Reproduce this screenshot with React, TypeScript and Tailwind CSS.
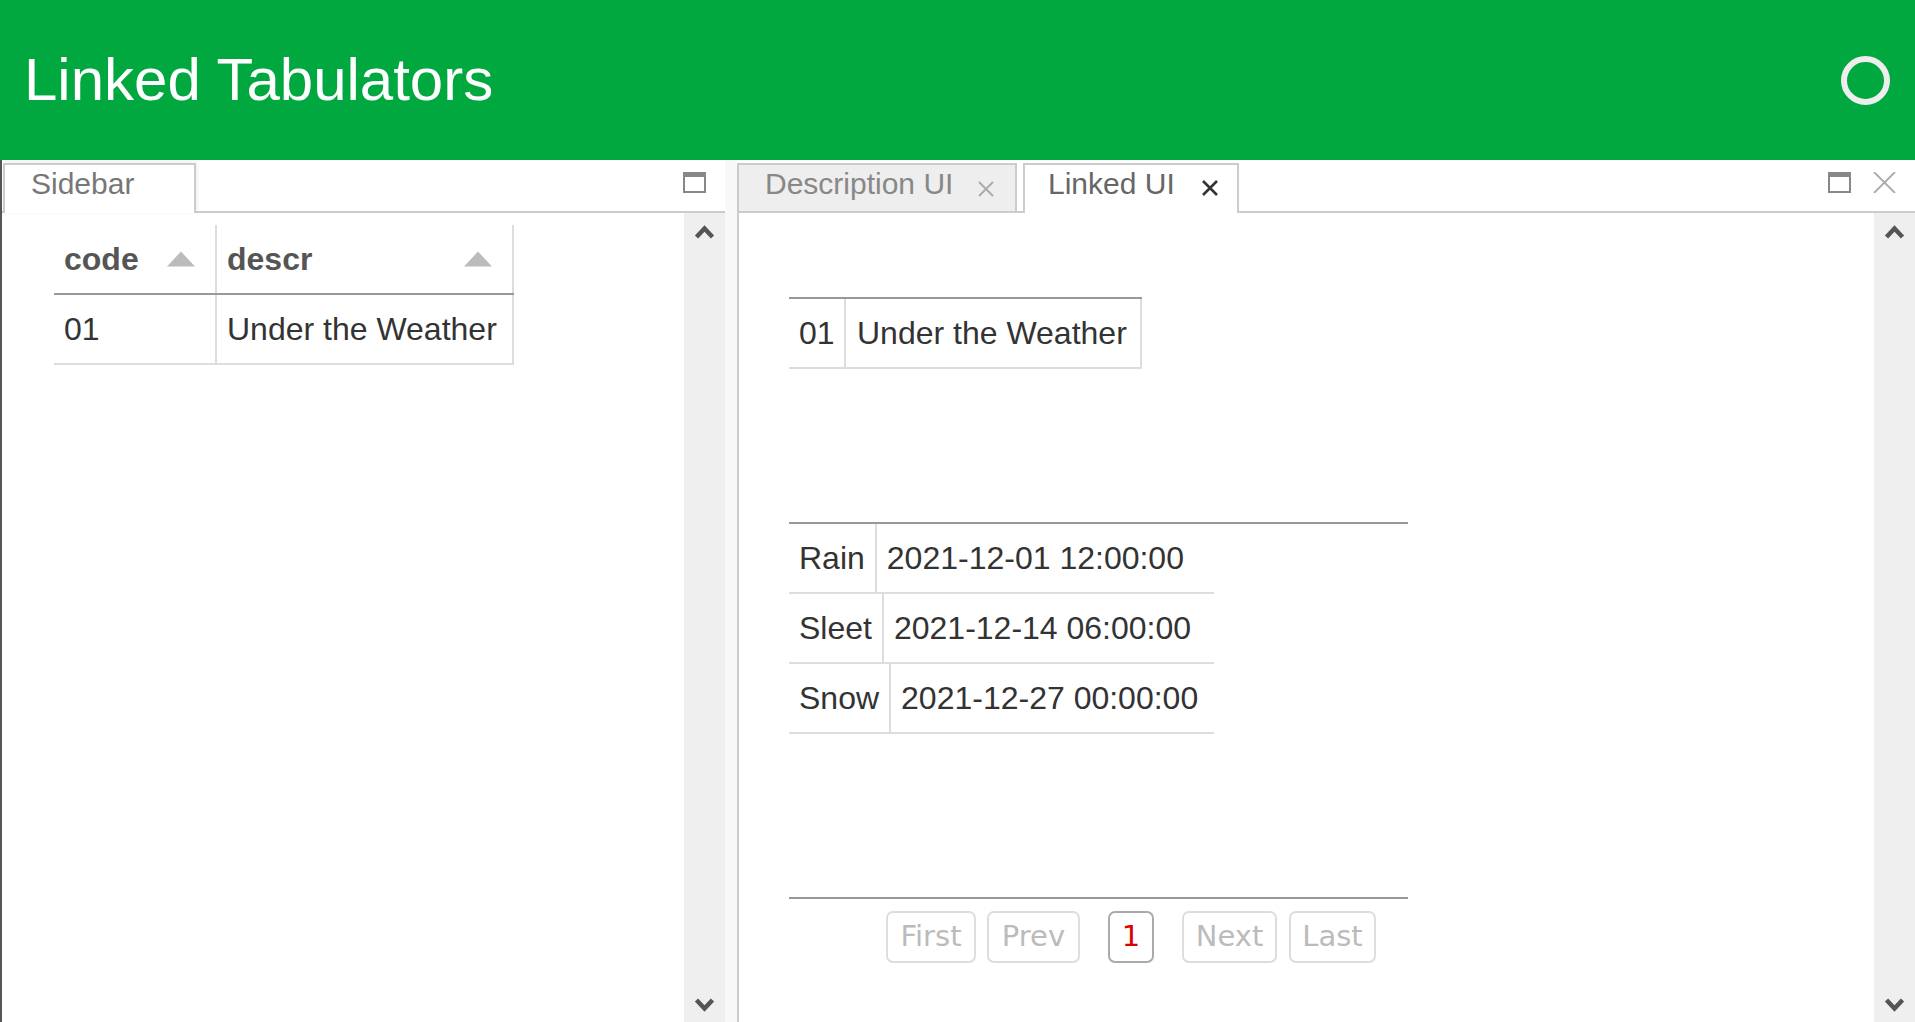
import React from 'react';

const SANS = "font-['Liberation_Sans',Arial,sans-serif]";

function Chevron({ up }: { up?: boolean }) {
  return (
    <svg width="21" height="14" viewBox="0 0 21 14" className="block">
      <polyline
        points={up ? '2.5,12 10.5,3.5 18.5,12' : '2.5,2 10.5,10.5 18.5,2'}
        fill="none"
        stroke="#555"
        strokeWidth="4.5"
      />
    </svg>
  );
}

function MaxIcon() {
  return <div className="h-[21px] w-[23px] border-2 border-t-[5px] border-[#888]" />;
}

function TabClose({ dark }: { dark?: boolean }) {
  return (
    <svg width="18" height="16" viewBox="0 0 18 16" className="block">
      <path
        d="M2 1 L16 15 M16 1 L2 15"
        stroke={dark ? '#333' : '#aaa'}
        strokeWidth={dark ? 2.6 : 1.8}
        fill="none"
      />
    </svg>
  );
}

function ScrollBar() {
  return (
    <div className="flex w-[41px] shrink-0 flex-col items-center justify-between bg-[#efefef] pt-[12px] pb-[10px]">
      <Chevron up />
      <Chevron />
    </div>
  );
}

function SortArrow() {
  return (
    <span className="absolute right-[20px] top-1/2 -translate-y-1/2 border-x-[14px] border-b-[15px] border-x-transparent border-b-[#bbb]" />
  );
}

const readings = [
  { kind: 'Rain', at: '2021-12-01 12:00:00' },
  { kind: 'Sleet', at: '2021-12-14 06:00:00' },
  { kind: 'Snow', at: '2021-12-27 00:00:00' },
];

function PageButton({ label, width, active }: { label: string; width: string; active?: boolean }) {
  return (
    <button
      className={`flex h-[52px] items-center justify-center rounded-[7px] border-2 font-['DejaVu_Sans',sans-serif] text-[29px] ${width} ${
        active ? 'border-[#aaa] text-[#d00]' : 'border-[#ddd] text-[#bbb]'
      }`}
    >
      {label}
    </button>
  );
}

export default function App() {
  return (
    <div className={`flex h-[1022px] w-[1915px] flex-col overflow-hidden bg-white ${SANS}`}>
      {/* app header */}
      <header className="flex h-[160px] shrink-0 items-center justify-between bg-[#00a83f] pl-[24px] pr-[25px]">
        <h1 className="text-[60px] leading-[60px] text-white">Linked Tabulators</h1>
        <div className="h-[49px] w-[49px] rounded-full border-[6px] border-[#eee]" />
      </header>

      <div className="flex min-h-0 flex-1">
        {/* sidebar stack */}
        <section className="flex w-[725px] shrink-0 flex-col border-l-2 border-[#555]">
          <div className="relative flex h-[53px] shrink-0 items-end border-b-2 border-[#ccc]">
            <div className="relative z-10 -mb-[2px] ml-[1px] h-[50px] w-[193px] border-x-2 border-t-2 border-[#ccc] bg-white pl-[26px] pt-[2px] text-[30px] leading-[34px] text-[#777] shadow-[1px_-1px_4px_rgba(0,0,0,0.08)]">
              Sidebar
            </div>
            <div className="mb-auto ml-auto mr-[19px] mt-[12px]">
              <MaxIcon />
            </div>
          </div>
          <div className="flex min-h-0 flex-1">
            <div className="flex-1 pl-[52px] pt-[12px] text-[32px]">
              <div className="w-[460px]">
                <div className="flex h-[70px] border-b-2 border-[#999] font-bold text-[#555]">
                  <div className="relative flex w-[163px] items-center border-r-2 border-[#ddd] px-[10px]">
                    code
                    <SortArrow />
                  </div>
                  <div className="relative flex w-[297px] items-center border-r-2 border-[#ddd] px-[10px]">
                    descr
                    <SortArrow />
                  </div>
                </div>
                <div className="flex h-[70px] border-b-2 border-[#ddd] text-[#333]">
                  <div className="flex w-[163px] items-center border-r-2 border-[#ddd] px-[10px]">01</div>
                  <div className="flex w-[297px] items-center whitespace-nowrap border-r-2 border-[#ddd] px-[10px]">
                    Under the Weather
                  </div>
                </div>
              </div>
            </div>
            <ScrollBar />
          </div>
        </section>

        {/* splitter */}
        <div className="w-[12px] shrink-0 bg-[#f8f8f8]" />

        {/* main stack */}
        <section className="flex min-w-0 flex-1 flex-col">
          <div className="relative flex h-[53px] shrink-0 items-end border-b-2 border-[#ccc]">
            <div className="flex h-[48px] w-[280px] items-start justify-between border-x-2 border-t-2 border-[#ccc] bg-[#eee] pl-[26px] pr-[20px] pt-[2px] text-[30px] leading-[34px] text-[#888]">
              <span>Description UI</span>
              <span className="mt-[14px]">
                <TabClose />
              </span>
            </div>
            <div className="relative z-10 -mb-[2px] ml-[6px] flex h-[50px] w-[216px] items-start justify-between border-x-2 border-t-2 border-[#ccc] bg-white pl-[23px] pr-[18px] pt-[2px] text-[30px] leading-[34px] text-[#666]">
              <span>Linked UI</span>
              <span className="mt-[13px]">
                <TabClose dark />
              </span>
            </div>
            <div className="mb-auto ml-auto mr-[19px] mt-[12px] flex items-center gap-[22px]">
              <MaxIcon />
              <svg width="23" height="21" viewBox="0 0 23 21" className="block">
                <path d="M1 0 L22 21 M22 0 L1 21" stroke="#aaa" strokeWidth="1.8" fill="none" />
              </svg>
            </div>
          </div>

          <div className="flex min-h-0 flex-1 border-l-2 border-[#ccc]">
            <div className="flex flex-1 flex-col pl-[50px] pt-[84px] text-[32px] text-[#333]">
              {/* linked record */}
              <div className="w-[353px] border-t-2 border-[#999]">
                <div className="flex h-[70px] border-b-2 border-[#ddd]">
                  <div className="flex w-[57px] items-center border-r-2 border-[#ddd] px-[10px]">01</div>
                  <div className="flex w-[296px] items-center whitespace-nowrap border-r-2 border-[#ddd] px-[11px]">
                    Under the Weather
                  </div>
                </div>
              </div>

              {/* readings */}
              <div className="mt-[153px] h-[375px] w-[619px] border-t-2 border-[#999]">
                {readings.map((r) => (
                  <div key={r.kind} className="flex h-[70px] w-[425px] border-b-2 border-[#ddd]">
                    <div className="flex items-center border-r-2 border-[#ddd] px-[10px]">{r.kind}</div>
                    <div className="flex items-center whitespace-nowrap px-[10px]">{r.at}</div>
                  </div>
                ))}
              </div>

              {/* pagination */}
              <div className="flex w-[619px] justify-end border-t-2 border-[#999] pr-[32px] pt-[12px]">
                <PageButton label="First" width="w-[90px]" />
                <div className="ml-[11px]">
                  <PageButton label="Prev" width="w-[93px]" />
                </div>
                <div className="mx-[28px]">
                  <PageButton label="1" width="w-[46px]" active />
                </div>
                <PageButton label="Next" width="w-[95px]" />
                <div className="ml-[12px]">
                  <PageButton label="Last" width="w-[87px]" />
                </div>
              </div>
            </div>
            <ScrollBar />
          </div>
        </section>
      </div>
    </div>
  );
}
